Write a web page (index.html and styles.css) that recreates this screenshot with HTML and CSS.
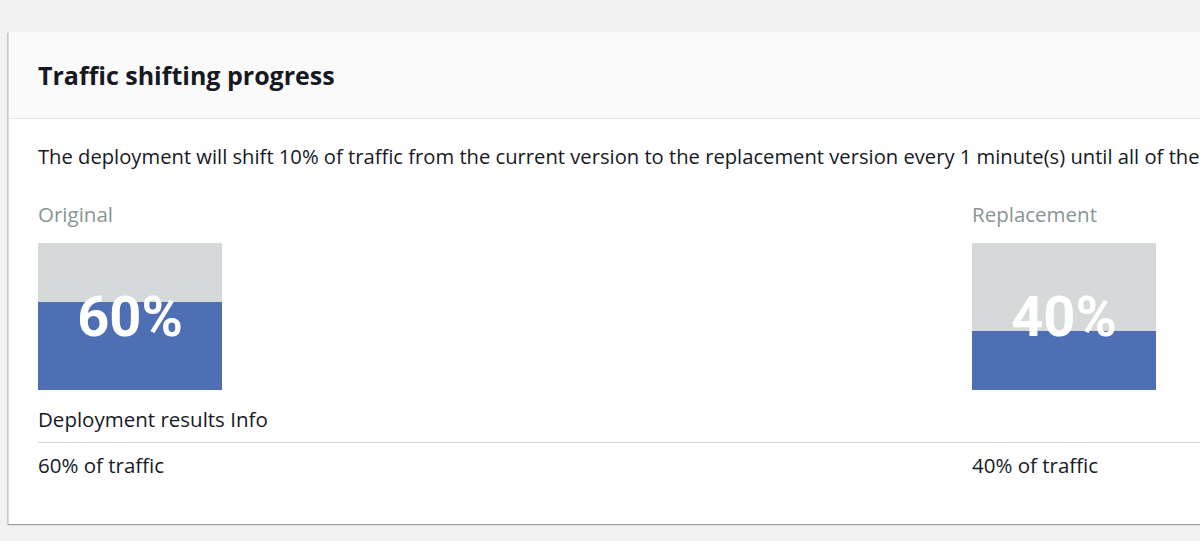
FILE: index.html
```html
<!DOCTYPE html>
<html lang="en">
<head>
<meta charset="utf-8">
<title>Traffic shifting progress</title>
<link rel="stylesheet" href="styles.css">
</head>
<body>
<div class="page">
  <section class="card">
    <header class="card-header">
      <h2 class="title">Traffic shifting progress</h2>
    </header>
    <div class="card-body">
      <p class="desc">The deployment will shift 10% of traffic from the current version to the replacement version every 1 minute(s) until all of the traffic has been shifted to the replacement version.</p>
      <div class="versions">
        <div class="version">
          <div class="label">Original</div>
          <div class="meter">
            <div class="meter-empty" style="flex: 40"></div>
            <div class="meter-fill" style="flex: 60"></div>
            <span class="meter-value">60%</span>
          </div>
        </div>
        <div class="version">
          <div class="label">Replacement</div>
          <div class="meter">
            <div class="meter-empty" style="flex: 60"></div>
            <div class="meter-fill" style="flex: 40"></div>
            <span class="meter-value">40%</span>
          </div>
        </div>
      </div>
      <div class="results-title">Deployment results <span class="info">Info</span></div>
      <div class="results">
        <div class="result">60% of traffic</div>
        <div class="result">40% of traffic</div>
      </div>
    </div>
  </section>
</div>
</body>
</html>
```
FILE: styles.css
```css
html, body {
  margin: 0;
  padding: 0;
  overflow: hidden;
}
body {
  background: #f2f2f2;
  font-family: "Open Sans", "Noto Sans", sans-serif;
  color: #16191f;
}
.page {
  padding: 32px 0 16px 8px;
  width: 1500px;
}
.card {
  background: #ffffff;
  border-left: 1px solid #dcdcdc;
  box-shadow: 0 1px 1px 0 rgba(0, 28, 36, 0.3), -1px 1px 1px 0 rgba(0, 28, 36, 0.12);
}
.card-header {
  background: #fafafa;
  border-bottom: 1px solid #e6e6e6;
  padding: 26px 29px 25px;
}
.title {
  margin: 0;
  font-size: 25px;
  line-height: 35px;
  font-weight: 700;
  color: #16191f;
}
.card-body {
  padding: 25px 29px 47px;
}
.desc {
  margin: 0;
  font-size: 20.2px;
  line-height: 24px;
  white-space: nowrap;
}
.versions {
  display: grid;
  grid-template-columns: 934px 1fr;
  margin-top: 34px;
}
.label {
  font-size: 20.5px;
  line-height: 24px;
  color: #879596;
}
.meter {
  position: relative;
  margin-top: 17px;
  width: 184px;
  height: 147px;
  display: flex;
  flex-direction: column;
}
.meter-empty {
  background: #d5d9d9;
}
.meter-fill {
  background: #4f6fb5;
}
.meter-value {
  position: absolute;
  inset: 0;
  display: flex;
  align-items: center;
  justify-content: center;
  font-family: Roboto, "Liberation Sans", sans-serif;
  font-weight: 700;
  font-size: 56px;
  color: #ffffff;
}
.results-title {
  margin-top: 17px;
  font-size: 20.5px;
  line-height: 24px;
  padding-bottom: 11px;
  border-bottom: 1px solid #d5d5d5;
}
.results {
  display: grid;
  grid-template-columns: 934px 1fr;
  margin-top: 10px;
}
.result {
  font-size: 20.5px;
  line-height: 24px;
}
```
